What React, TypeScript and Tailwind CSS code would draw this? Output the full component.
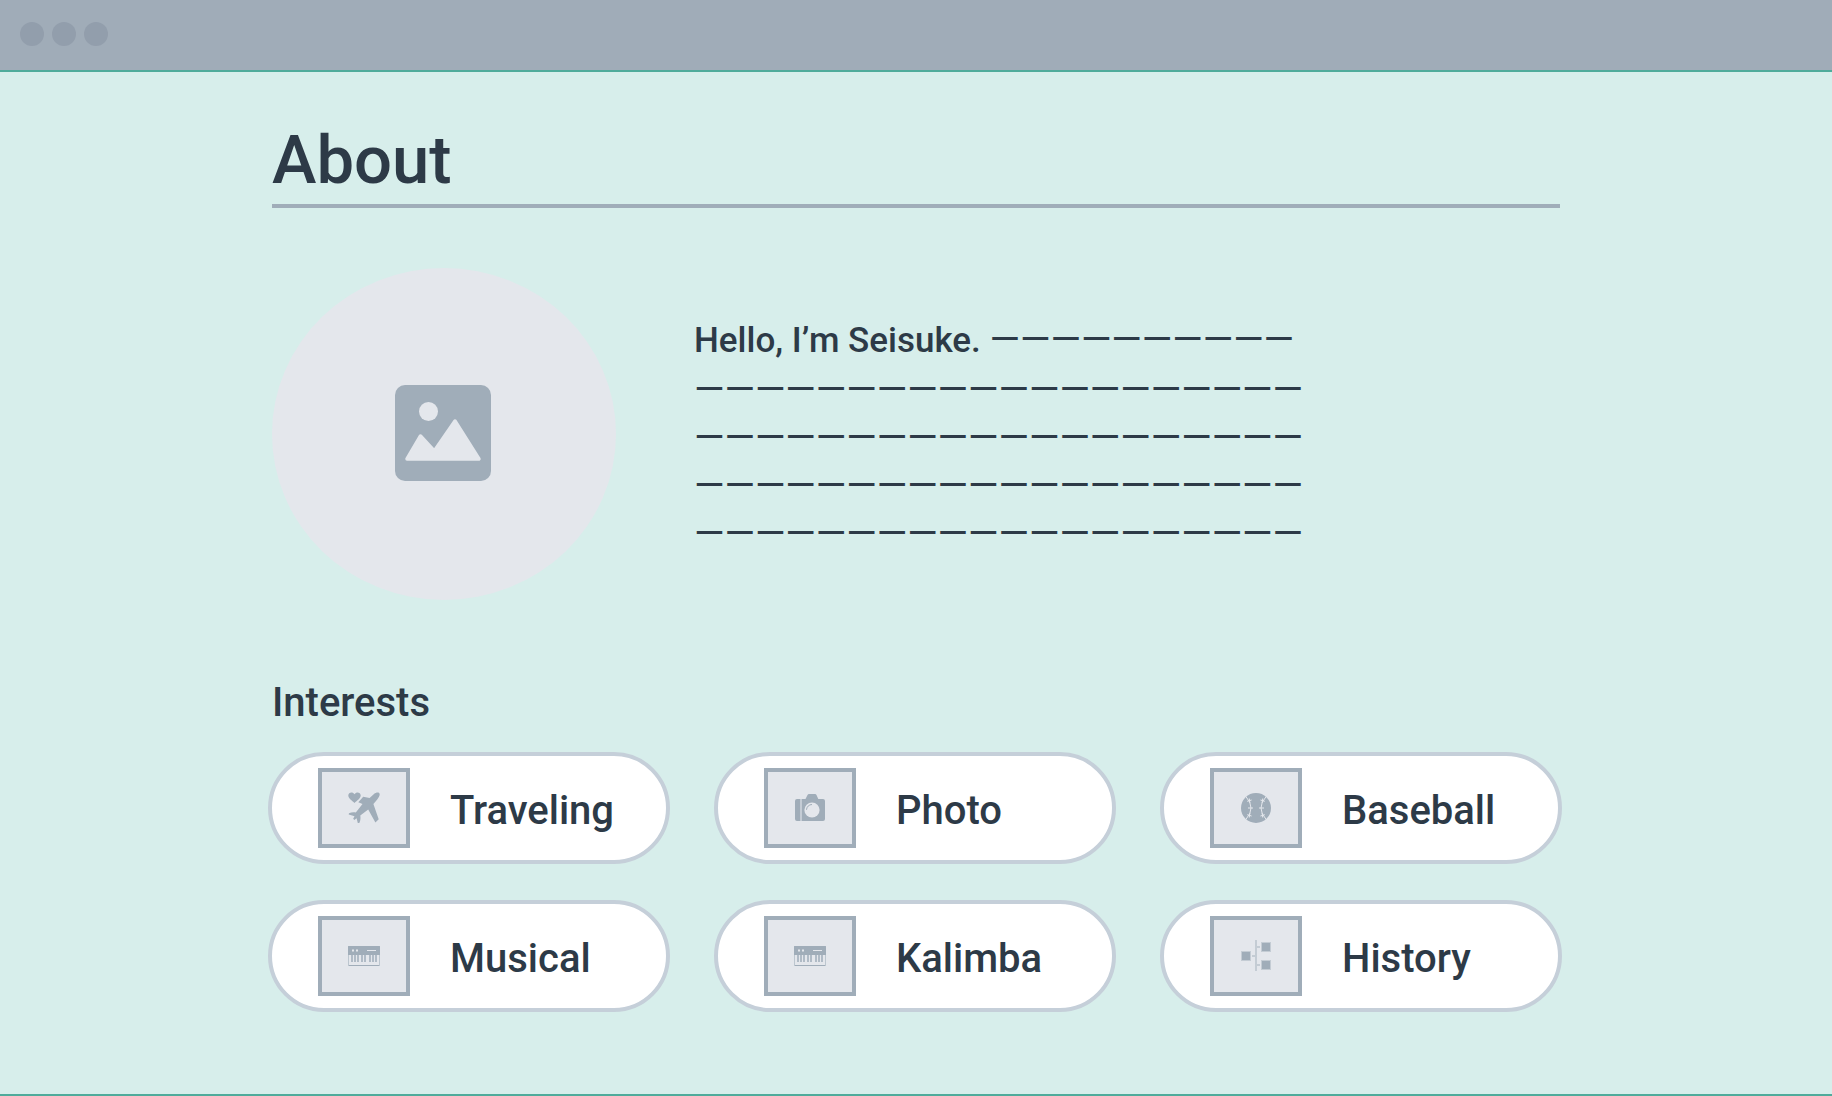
import React from "react";

const ICON = "size-8 text-[#a0adb9]";

function PictureIcon() {
  return (
    <svg viewBox="0 0 96 96" className="size-24 text-[#a0adb9]" aria-hidden="true">
      <rect width="96" height="96" rx="10" fill="currentColor" />
      <circle cx="33.500" cy="26.500" r="9.500" fill="#e4e7ec" />
      <path
        d="M12 74 L25.500 51 L39.300 66 L60 36 L84 74 Z"
        fill="#e4e7ec"
        stroke="#e4e7ec"
        strokeWidth="3.500"
        strokeLinejoin="round"
      />
    </svg>
  );
}

function PlaneIcon() {
  return (
    <svg viewBox="0 0 32 32" className={ICON} fill="currentColor" aria-hidden="true">
      <path d="M6.500 11 C4 8.500 .3 6.500 .3 3.500 C.3 .3 4.600 -.6 6.500 2.200 C8.400 -.6 12.700 .3 12.700 3.500 C12.700 6.500 9 8.500 6.500 11 Z" />
      <path d="M15.200 4.800 L21.600 6 L26 2 C28.500 -.2 32.600 -.2 31.500 3.600 C31 5.500 29 8 25.400 12 L30.700 27.200 L27.400 30.600 L20.200 17.500 L12.300 23.500 C12.700 26 12.500 29 11.300 31 L9.800 31 L8.600 26.300 L6.300 28 L5.200 26.800 L6.500 24.200 L.7 22.400 L1 21.200 C3 20.200 5.500 20 7.800 20.400 L14.500 12 L10.300 10.200 Z" />
    </svg>
  );
}

function CameraIcon() {
  return (
    <svg viewBox="0 0 32 32" className={ICON} fill="currentColor" aria-hidden="true">
      <path d="M3 7 H11.500 L13.500 3 Q14 2 15 2 H21 Q22 2 22.500 3 L24.300 7 H29 Q31 7 31 9 V27 Q31 29 29 29 H3 Q1 29 1 27 V9 Q1 7 3 7 Z" />
      <rect x="6" y="7" width="2" height="22" fill="#c4ccd5" />
      <circle cx="18" cy="18" r="7.600" fill="#e4e7ec" />
      <path d="M12.500 17.800 A5.500 5.500 0 0 1 18 12.500" fill="none" stroke="currentColor" strokeWidth="1" />
    </svg>
  );
}

function BaseballIcon() {
  return (
    <svg viewBox="0 0 32 32" className={ICON} aria-hidden="true">
      <circle cx="16" cy="16" r="15" fill="currentColor" />
      <g fill="none" stroke="#e4e7ec" strokeWidth="1">
        <path d="M6 4.800 Q11 10 11 16 T6 27.200 M26 4.800 Q21 10 21 16 T26 27.200" />
        <path d="M8 16 H13 M7.200 9.300 L11.600 8 M9.300 6.500 L9.800 11 M7.200 22.700 L11.600 24 M9.300 25.500 L9.800 21 M19 16 H24 M24.800 9.300 L20.400 8 M22.700 6.500 L22.200 11 M24.800 22.700 L20.400 24 M22.700 25.500 L22.200 21" />
      </g>
    </svg>
  );
}

function KeyboardIcon() {
  return (
    <svg viewBox="0 0 32 32" className={ICON} fill="currentColor" aria-hidden="true">
      <rect x=".5" y="6.500" width="31" height="19" fill="none" stroke="#bcc6cf" />
      <rect x="1" y="25" width="30" height="1" />
      <rect x="0" y="6" width="32" height="9" rx=".5" />
      <g fill="#b0bbc6">
        {[3, 6, 9, 13, 16, 21, 24, 27].map((x) => (
          <rect key={x} x={x} y="15" width="2" height="7" />
        ))}
      </g>
      <path d="M4 9.500 H6 V11.500 H4 Z M8 9.500 H10 V11.500 H8 Z M19 10 H28 V11 H19 Z" fill="#e4e7ec" />
    </svg>
  );
}

function TreeIcon() {
  return (
    <svg viewBox="0 0 32 32" className={ICON} aria-hidden="true">
      <path d="M15 0 H17 V31 H15 Z M12 15 H15 V17 H12 Z M17 6 H20 V8 H17 Z M17 24 H20 V26 H17 Z" fill="#c4ccd4" />
      <g fill="currentColor" stroke="#c4ccd4" strokeWidth="1">
        <rect x="1.500" y="11.500" width="9" height="9" />
        <rect x="21.500" y="2.500" width="9" height="9" />
        <rect x="21.500" y="20.500" width="9" height="9" />
      </g>
    </svg>
  );
}

const interests = [
  { label: "Traveling", Icon: PlaneIcon },
  { label: "Photo", Icon: CameraIcon },
  { label: "Baseball", Icon: BaseballIcon },
  { label: "Musical", Icon: KeyboardIcon },
  { label: "Kalimba", Icon: KeyboardIcon },
  { label: "History", Icon: TreeIcon },
];

const LINE = "————————————————————";

export default function App() {
  return (
    <div className="flex min-h-screen flex-col border-b-2 border-[#4fab9b] bg-[#d7eeeb] font-['Roboto',sans-serif] font-medium text-[#2d3a47]">
      <header className="flex h-[72px] items-center gap-2 border-b-2 border-[#4fab9b] bg-[#a0acb8] px-5 pb-0.5">
        <span className="size-6 rounded-full bg-[#929eac]" />
        <span className="size-6 rounded-full bg-[#929eac]" />
        <span className="size-6 rounded-full bg-[#929eac]" />
      </header>

      <main className="mx-auto w-full max-w-[1288px] pt-[52px] pb-20">
        <h1 className="border-b-4 border-[#a0adb9] pb-2 text-[67px] leading-[72px]">About</h1>

        <section className="mt-[60px] flex items-center gap-[78px]">
          <div className="flex h-[332px] w-[344px] shrink-0 items-center justify-center rounded-[50%] bg-[#e4e7ec] pr-0.5 pb-0.5">
            <PictureIcon />
          </div>
          <div className="pt-1.5 text-[35px] leading-[48px]">
            <p>
              Hello, I’m Seisuke. <span className="text-[39px] leading-none font-normal">——————————</span>
            </p>
            <div className="text-[39px] font-normal">
              <p>{LINE}</p>
              <p>{LINE}</p>
              <p>{LINE}</p>
              <p>{LINE}</p>
            </div>
          </div>
        </section>

        <section className="mt-[79px]">
          <h2 className="text-[40px] leading-[48px]">Interests</h2>
          <ul className="mt-[25px] -mr-0.5 -ml-1 grid grid-cols-3 gap-x-11 gap-y-9">
            {interests.map(({ label, Icon }) => (
              <li
                key={label}
                className="flex h-28 items-center gap-10 rounded-full border-4 border-[#c5cfd9] bg-white pl-[46px]"
              >
                <span className="flex h-20 w-[92px] shrink-0 items-center justify-center border-4 border-[#a0adb9] bg-[#e4e7ec]">
                  <Icon />
                </span>
                <span className="pt-1.5 text-[40px] leading-[48px]">{label}</span>
              </li>
            ))}
          </ul>
        </section>
      </main>
    </div>
  );
}
